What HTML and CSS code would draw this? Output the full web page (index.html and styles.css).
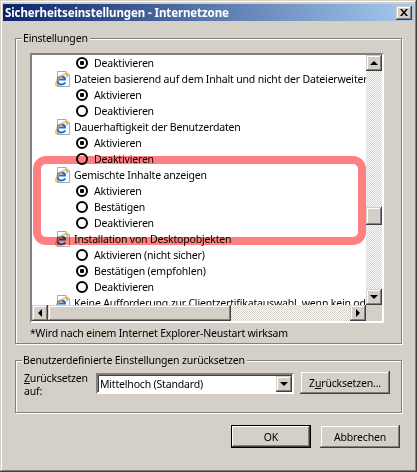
FILE: index.html
```html
<!DOCTYPE html>
<html lang="de">
<head>
<meta charset="utf-8">
<title>Sicherheitseinstellungen - Internetzone</title>
<link rel="stylesheet" href="styles.css">
</head>
<body>
<svg class="defs" width="0" height="0">
  <symbol id="ie" viewBox="0 0 16 16">
    <path d="M2.500 .5H11L14.500 4V15.500H2.500Z" fill="#fff" stroke="#a8a8a8"/>
    <path d="M11 .5V4H14.500" fill="#e4e4e4" stroke="#a8a8a8"/>
    <path d="M3 8.500H10C10 6.500 8.500 5.500 6.500 5.500C4 5.500 2.500 7.500 2.500 9.500C2.500 12 4.500 13.500 6.500 13.500C8 13.500 9.500 12.800 10.300 11.500" fill="none" stroke="#1f6fd8" stroke-width="2"/>
    <path d="M1 14.500C0 12 3 7 7 4.500C9.500 3 11.500 2.500 12.500 3.500C13 4.500 12.500 5.500 11.500 6.500" fill="none" stroke="#e8b030" stroke-width="1.200"/>
    <path d="M1 14.500C2 15.500 3.500 15 5 14" fill="none" stroke="#e8b030" stroke-width="1.200"/>
  </symbol>
</svg>

<div class="dialog">
  <div class="titlebar">
    <span class="title">Sicherheitseinstellungen - Internetzone</span>
    <span class="btn close">
      <svg width="8" height="7" viewBox="0 0 8 7"><path d="M0 0H2L4 2.500L6 0H8L5 3.500L8 7H6L4 4.500L2 7H0L3 3.500Z" fill="#000"/></svg>
    </span>
  </div>

  <div class="group settings">
    <div class="group-label">Einstellungen</div>
    <div class="listbox">
      <div class="list-row">
        <div class="list-body">
          <div class="row opt"><i class="radio on"></i>Deaktivieren</div>
          <div class="row head"><svg class="ie"><use href="#ie"/></svg>Dateien basierend auf dem Inhalt und nicht der Dateierweiterung öffnen</div>
          <div class="row opt"><i class="radio on"></i>Aktivieren</div>
          <div class="row opt"><i class="radio"></i>Deaktivieren</div>
          <div class="row head"><svg class="ie"><use href="#ie"/></svg>Dauerhaftigkeit der Benutzerdaten</div>
          <div class="row opt"><i class="radio on"></i>Aktivieren</div>
          <div class="row opt"><i class="radio"></i>Deaktivieren</div>
          <div class="row head"><svg class="ie"><use href="#ie"/></svg>Gemischte Inhalte anzeigen</div>
          <div class="row opt"><i class="radio on"></i>Aktivieren</div>
          <div class="row opt"><i class="radio"></i>Bestätigen</div>
          <div class="row opt"><i class="radio"></i>Deaktivieren</div>
          <div class="row head"><svg class="ie"><use href="#ie"/></svg>Installation von Desktopobjekten</div>
          <div class="row opt"><i class="radio"></i>Aktivieren (nicht sicher)</div>
          <div class="row opt"><i class="radio on"></i>Bestätigen (empfohlen)</div>
          <div class="row opt"><i class="radio"></i>Deaktivieren</div>
          <div class="row head"><svg class="ie"><use href="#ie"/></svg>Keine Aufforderung zur Clientzertifikatauswahl, wenn kein oder</div>
          <div class="highlight"></div>
        </div>
        <div class="vscroll">
          <span class="btn sb"><i class="arrow up"></i></span>
          <span class="track t1"></span>
          <span class="btn thumb-v"></span>
          <span class="track"></span>
          <span class="btn sb"><i class="arrow down"></i></span>
        </div>
      </div>
      <div class="hscroll">
        <span class="btn sb"><i class="arrow left"></i></span>
        <span class="btn thumb-h"></span>
        <span class="track"></span>
        <span class="btn sb"><i class="arrow right"></i></span>
        <span class="corner"></span>
      </div>
    </div>
    <div class="note">*Wird nach einem Internet Explorer-Neustart wirksam</div>
  </div>

  <div class="group reset">
    <div class="group-label">Benutzerdefinierte Einstellungen zurücksetzen</div>
    <div class="reset-row">
      <label class="reset-label"><u>Z</u>urücksetzen auf:</label>
      <div class="combo">
        <span class="combo-text">Mittelhoch (Standard)</span>
        <span class="btn sb"><i class="arrow down"></i></span>
      </div>
      <span class="btn push reset-btn">Z<u>u</u>rücksetzen...</span>
    </div>
  </div>

  <div class="actions">
    <span class="btn push default">OK</span>
    <span class="btn push">Abbrechen</span>
  </div>
</div>
</body>
</html>
```

FILE: styles.css
```css
html, body { margin: 0; padding: 0; }
body {
    width: 417px; height: 472px;
    overflow: hidden;
    background: #d4d0c8;
    font-family: "Noto Sans", sans-serif;
    font-size: 10.5px;
    letter-spacing: -0.18px;
    color: #000;
}
.defs { position: absolute; }

.dialog {
    box-sizing: border-box;
    width: 417px; height: 472px;
    padding: 4px 3px 0 3px;
    display: flex;
    flex-direction: column;
    box-shadow: inset -1px -1px #404040, inset 1px 1px #d4d0c8, inset -2px -2px #808080, inset 2px 2px #fff;
}

/* title bar */
.titlebar {
    height: 17px;
    flex: none;
    display: flex;
    align-items: center;
    justify-content: space-between;
    padding: 0 2px;
    background: linear-gradient(to right, #0a246a, #a6caf0);
    color: #fff;
    font-weight: bold;
    font-size: 11.5px;
    letter-spacing: -0.1px;
}
.title { white-space: nowrap; }

/* raised look shared by everything clickable */
.btn {
    box-sizing: border-box;
    display: flex;
    align-items: center;
    justify-content: center;
    flex: none;
    background: #d4d0c8;
    box-shadow: inset -1px -1px #404040, inset 1px 1px #d4d0c8, inset -2px -2px #808080, inset 2px 2px #fff;
}
.close { width: 16px; height: 14px; }
.sb { width: 16px; height: 16px; }

/* etched group boxes */
.group {
    box-sizing: border-box;
    flex: none;
    margin-left: 12px;
    width: 387px;
    border: 1px solid #808080;
    box-shadow: 1px 1px 0 #fff, inset 1px 1px 0 #fff;
}
.group-label {
    width: max-content;
    margin: -8px 0 0 6px;
    padding: 0 2px 0 1px;
    background: #d4d0c8;
    line-height: 15px;
    height: 15px;
}
.settings { margin-top: 17px; height: 306px; }
.reset { margin-top: 16px; height: 53px; }

/* settings list */
.listbox {
    box-sizing: border-box;
    width: 354px; height: 270px;
    margin: 7px 0 0 14px;
    border: 2px solid;
    border-color: #808080 #fff #fff #808080;
    box-shadow: inset 1px 1px 0 #404040;
    background: #fff;
    display: flex;
    flex-direction: column;
}
.list-row { display: flex; height: 250px; flex: none; }
.list-body {
    position: relative;
    flex: 1;
    overflow: hidden;
    background: #fff;
}
.row {
    display: flex;
    align-items: center;
    height: 16px;
    white-space: nowrap;
}
.head { padding-left: 23px; }
.opt { padding-left: 44px; }
.ie { width: 16px; height: 16px; flex: none; margin-right: 3px; }

.radio {
    box-sizing: border-box;
    flex: none;
    width: 12px; height: 12px;
    margin-right: 6px;
    border: 2px solid #000;
    border-radius: 50%;
    background: #fff;
}
.radio.on { background: radial-gradient(circle, #000 0 2px, #fff 2.5px); }

/* red marker drawn on top of the screenshot */
.highlight {
    position: absolute;
    left: 1px; top: 101px;
    box-sizing: border-box;
    width: 333px; height: 89px;
    border: 8px solid #ff8080;
    border-radius: 13px;
    mix-blend-mode: multiply;
}

/* scrollbars */
.track {
    flex: 1;
    background: repeating-conic-gradient(#fff 0 25%, #d4d0c8 0 50%) 0 0 / 2px 2px;
}
.vscroll { width: 16px; display: flex; flex-direction: column; flex: none; }
.track.t1 { flex: none; height: 136px; }
.thumb-v { width: 16px; height: 18px; }
.hscroll { display: flex; height: 16px; flex: none; }
.thumb-h { width: 183px; height: 16px; }
.corner { width: 16px; background: #d4d0c8; flex: none; }

.arrow { width: 0; height: 0; border: 4px solid transparent; display: block; }
.arrow.up { border-top: 0; border-bottom-color: #000; }
.arrow.down { border-bottom: 0; border-top-color: #000; }
.arrow.left { border-left: 0; border-right-color: #000; }
.arrow.right { border-right: 0; border-left-color: #000; }

.note { margin: 4px 0 0 14px; height: 13px; line-height: 13px; white-space: nowrap; }

/* reset area */
.reset-row {
    display: flex;
    align-items: flex-start;
    padding: 3px 0 0 8px;
}
.reset-label { width: 72px; line-height: 13px; margin-top: 1px; flex: none; }
.combo {
    box-sizing: border-box;
    width: 198px; height: 21px;
    flex: none;
    margin-top: 2px;
    border: 2px solid;
    border-color: #808080 #fff #fff #808080;
    box-shadow: inset 1px 1px 0 #404040;
    background: #fff;
    display: flex;
    align-items: center;
    justify-content: space-between;
}
.combo-text { padding-left: 2px; white-space: nowrap; }
.push { height: 23px; width: 80px; white-space: nowrap; }
.reset-btn { width: 90px; margin-left: 6px; }

/* bottom buttons */
.actions {
    display: flex;
    gap: 9px;
    margin: 12px 0 0 228px;
}
.default {
    box-shadow: inset 0 0 0 1px #000, inset -2px -2px #404040, inset 2px 2px #fff, inset -3px -3px #808080;
}
```
